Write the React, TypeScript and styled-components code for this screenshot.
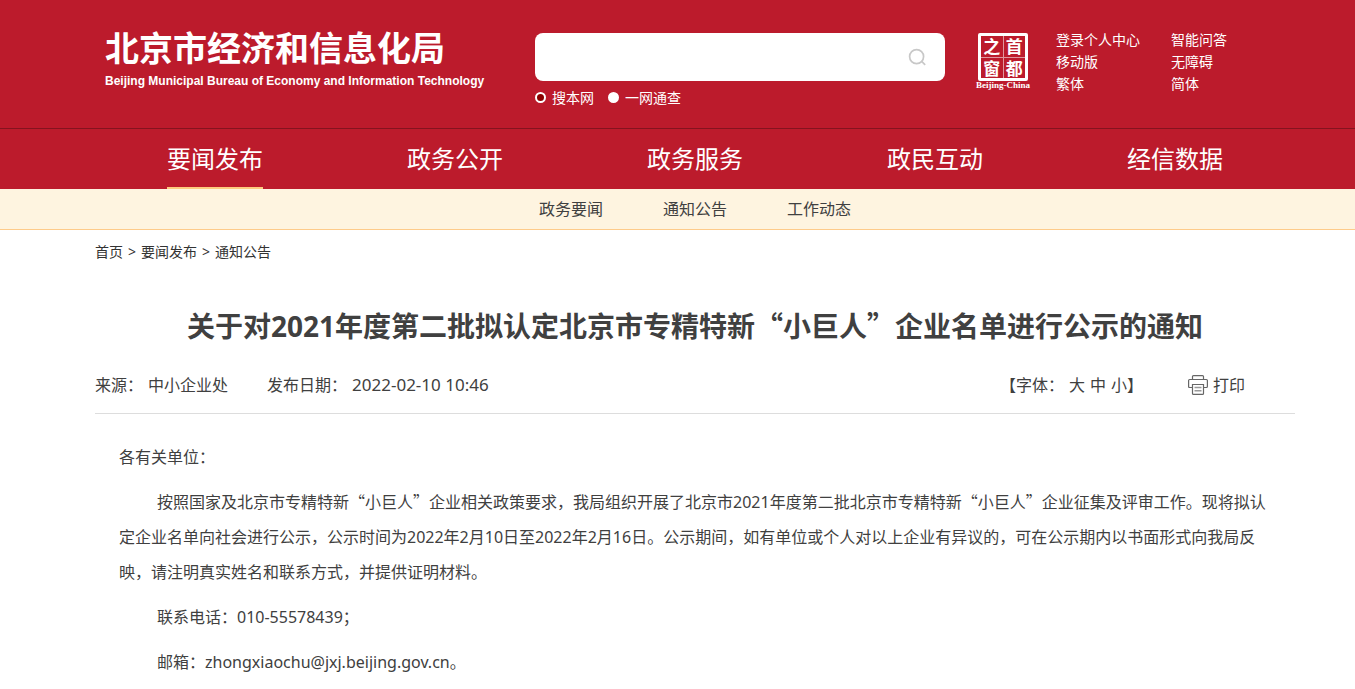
import React from "react";
import styled, { createGlobalStyle } from "styled-components";

const sans = `"Noto Sans", "Noto Sans CJK SC", sans-serif`;
const cjk = `"Noto Sans CJK SC", sans-serif`;

const GlobalStyle = createGlobalStyle`
  * { box-sizing: border-box; }
  body { margin: 0; background: #fff; color: #404040; font: 16px/24px ${sans}; }
  a { color: inherit; text-decoration: none; }
  ul, ol { list-style: none; margin: 0; padding: 0; }
  h1, h2, p { margin: 0; }
`;

const Band = styled.div`
  padding-left: 35px;
`;

const Container = styled.div`
  max-width: 1200px;
  margin: 0 auto;
`;

const Header = styled.header`
  background: #bc1b2c;
  color: #fff;
`;

const HeaderRow = styled(Container)`
  display: flex;
  align-items: flex-start;
  min-height: 128px;
  padding: 27px 0 16px 10px;
`;

const Brand = styled.a`
  display: block;
  flex: 0 0 430px;
`;

const BrandName = styled.span`
  display: block;
  font: bold 34px/40px ${cjk};
`;

const BrandSub = styled.span`
  display: block;
  padding-top: 5px;
  font: bold 12px/18px "Liberation Sans", sans-serif;
  white-space: nowrap;
`;

const SearchForm = styled.form`
  flex: 0 0 410px;
  padding-top: 6px;
`;

const SearchBox = styled.div`
  display: flex;
  align-items: center;
  height: 48px;
  padding-right: 16px;
  background: #fff;
  border-radius: 8px;
`;

const SearchInput = styled.input`
  flex: 1;
  min-width: 0;
  height: 48px;
  padding: 0 16px;
  border: 0;
  outline: 0;
  background: transparent;
  font: 16px ${sans};
`;

const SearchButton = styled.button`
  display: flex;
  padding: 2px;
  border: 0;
  background: transparent;
  cursor: pointer;
`;

const Scopes = styled.div`
  display: flex;
  gap: 14px;
  padding-top: 5px;
`;

const Scope = styled.label`
  display: flex;
  align-items: center;
  gap: 6px;
  font: 14px/22px ${cjk};
`;

const Radio = styled.input`
  appearance: none;
  width: 11px;
  height: 11px;
  margin: 0;
  border: 2px solid #fff;
  border-radius: 50%;
  background: #fff;
  &:checked { background: #8b0000; }
`;

const Seal = styled.a`
  display: flex;
  flex-direction: column;
  align-items: center;
  width: 54px;
  margin: 6px 26px 0 31px;
`;

const SealGrid = styled.span`
  display: grid;
  grid-template-columns: 1fr 1fr;
  grid-template-rows: 1fr 1fr;
  gap: 1px;
  width: 50px;
  height: 48px;
  border: 3px solid #fff;
  border-radius: 2px;
  background: #e0969e;
`;

const SealChar = styled.span`
  background: #bc1b2c;
  text-align: center;
  font: bold 17px/20px ${cjk};
`;

const SealCaption = styled.span`
  font: bold 9px/9px "Liberation Serif", serif;
  white-space: nowrap;
`;

const QuickLinks = styled.ul`
  display: grid;
  grid-template-columns: 115px auto;
  padding-top: 1px;
  font: 14px/22px ${cjk};
  white-space: nowrap;
`;

const NavBand = styled(Band)`
  border-top: 1px solid #85131f;
`;

const NavList = styled.ul`
  display: grid;
  grid-template-columns: repeat(5, 1fr);
  justify-items: center;
  font: 24px/58px ${cjk};
`;

const NavLink = styled.a<{ $active?: boolean }>`
  display: block;
  height: 60px;
  border-bottom: 2px solid ${(p) => (p.$active ? "#fecb7f" : "transparent")};
`;

const SubNav = styled(Band)`
  background: #fef4e0;
  border-bottom: 1px solid #fecb8a;
`;

const SubList = styled.ul`
  display: flex;
  justify-content: center;
  gap: 60px;
  line-height: 40px;
`;

const Crumbs = styled.ol`
  display: flex;
  gap: 5px;
  padding-top: 11px;
  font-size: 14px;
  line-height: 22px;
  color: #333;
`;

const Title = styled.h1`
  padding-top: 42px;
  font-size: 28px;
  line-height: 42px;
  text-align: center;
`;

const Meta = styled.div`
  display: flex;
  align-items: center;
  margin-top: 10px;
  padding-right: 50px;
  min-height: 57px;
  border-bottom: 1px solid #ddd;
`;

const MetaItem = styled.span`
  display: flex;
  gap: 5px;
  margin-right: 39px;
`;

const PublishTime = styled.time`
  font-size: 17px;
`;

const FontSizes = styled.div`
  display: flex;
  margin-left: auto;
`;

const SizeButton = styled.button`
  padding: 0;
  margin-left: 5px;
  border: 0;
  background: transparent;
  color: inherit;
  font: inherit;
  cursor: pointer;
`;

const PrintButton = styled.button`
  display: flex;
  align-items: center;
  gap: 5px;
  margin-left: 45px;
  padding: 0;
  border: 0;
  background: transparent;
  color: inherit;
  font: inherit;
  cursor: pointer;
`;

const Article = styled.article`
  padding: 26px 24px 0;
  line-height: 35px;
`;

const Paragraph = styled.p<{ $indent?: boolean }>`
  margin-bottom: 10px;
  text-indent: ${(p) => (p.$indent ? "38px" : "0")};
`;

const Quoted = styled.span`
  font-family: ${cjk};
  line-height: 1;
`;

const quickLinks = ["登录个人中心", "智能问答", "移动版", "无障碍", "繁体", "简体"];
const navItems = ["要闻发布", "政务公开", "政务服务", "政民互动", "经信数据"];
const subItems = ["政务要闻", "通知公告", "工作动态"];

const SearchIcon = () => (
  <svg width="20" height="20" viewBox="0 0 20 20" fill="none" stroke="#c8c8c8" strokeWidth="1.7" aria-hidden="true">
    <circle cx="9.6" cy="9.6" r="7" />
    <path d="M14.4 14.2l3.8 3.6" />
  </svg>
);

const PrintIcon = () => (
  <svg width="20" height="20" viewBox="0 0 20 20" fill="none" stroke="#666" strokeWidth="1.2" aria-hidden="true">
    <path d="M4.5 4.5V1.6q0-1 1-1h9q1 0 1 1v2.9" />
    <path d="M4.3 12.5H1.6q-1 0-1-1v-6q0-1 1-1h16.8q1 0 1 1v6q0 1-1 1h-2.7" />
    <path d="M4.5 9.5h11v8.9q0 1-1 1h-9q-1 0-1-1z" />
    <path d="M6.5 12.5h7M6.5 15.7h7" stroke="#999" strokeWidth="1.5" />
  </svg>
);

export default function App() {
  return (
    <>
      <GlobalStyle />
      <Header>
        <Band>
          <HeaderRow>
            <Brand href="#">
              <BrandName>北京市经济和信息化局</BrandName>
              <BrandSub>Beijing Municipal Bureau of Economy and Information Technology</BrandSub>
            </Brand>
            <SearchForm onSubmit={(e) => e.preventDefault()}>
              <SearchBox>
                <SearchInput type="text" aria-label="搜索" />
                <SearchButton type="submit" aria-label="搜索">
                  <SearchIcon />
                </SearchButton>
              </SearchBox>
              <Scopes>
                <Scope>
                  <Radio type="radio" name="scope" defaultChecked />
                  搜本网
                </Scope>
                <Scope>
                  <Radio type="radio" name="scope" />
                  一网通查
                </Scope>
              </Scopes>
            </SearchForm>
            <Seal href="#">
              <SealGrid>
                {["之", "首", "窗", "都"].map((c) => (
                  <SealChar key={c}>{c}</SealChar>
                ))}
              </SealGrid>
              <SealCaption>Beijing-China</SealCaption>
            </Seal>
            <QuickLinks>
              {quickLinks.map((t) => (
                <li key={t}>
                  <a href="#">{t}</a>
                </li>
              ))}
            </QuickLinks>
          </HeaderRow>
        </Band>
        <NavBand as="nav">
          <Container>
            <NavList>
              {navItems.map((t, i) => (
                <li key={t}>
                  <NavLink href="#" $active={i === 0}>
                    {t}
                  </NavLink>
                </li>
              ))}
            </NavList>
          </Container>
        </NavBand>
      </Header>
      <SubNav as="nav">
        <Container>
          <SubList>
            {subItems.map((t) => (
              <li key={t}>
                <a href="#">{t}</a>
              </li>
            ))}
          </SubList>
        </Container>
      </SubNav>
      <Band as="main">
        <Container>
          <Crumbs>
            <li><a href="#">首页</a></li>
            <li>&gt;</li>
            <li><a href="#">要闻发布</a></li>
            <li>&gt;</li>
            <li><a href="#">通知公告</a></li>
          </Crumbs>
          <Title>
            关于对2021年度第二批拟认定北京市专精特新<Quoted>“小巨人”</Quoted>企业名单进行公示的通知
          </Title>
          <Meta>
            <MetaItem>
              <span>来源：</span>
              <span>中小企业处</span>
            </MetaItem>
            <MetaItem>
              <span>发布日期：</span>
              <PublishTime>2022-02-10 10:46</PublishTime>
            </MetaItem>
            <FontSizes>
              <span>【字体：</span>
              <SizeButton type="button">大</SizeButton>
              <SizeButton type="button">中</SizeButton>
              <SizeButton type="button">小</SizeButton>
              <span>】</span>
            </FontSizes>
            <PrintButton type="button">
              <PrintIcon />
              打印
            </PrintButton>
          </Meta>
          <Article>
            <Paragraph>各有关单位：</Paragraph>
            <Paragraph $indent>
              按照国家及北京市专精特新<Quoted>“小巨人”</Quoted>企业相关政策要求，我局组织开展了北京市2021年度第二批北京市专精特新<Quoted>“小巨人”</Quoted>企业征集及评审工作。现将拟认定企业名单向社会进行公示，公示时间为2022年2月10日至2022年2月16日。公示期间，如有单位或个人对以上企业有异议的，可在公示期内以书面形式向我局反映，请注明真实姓名和联系方式，并提供证明材料。
            </Paragraph>
            <Paragraph $indent>联系电话：010-55578439；</Paragraph>
            <Paragraph $indent>邮箱：zhongxiaochu@jxj.beijing.gov.cn。</Paragraph>
          </Article>
        </Container>
      </Band>
    </>
  );
}
